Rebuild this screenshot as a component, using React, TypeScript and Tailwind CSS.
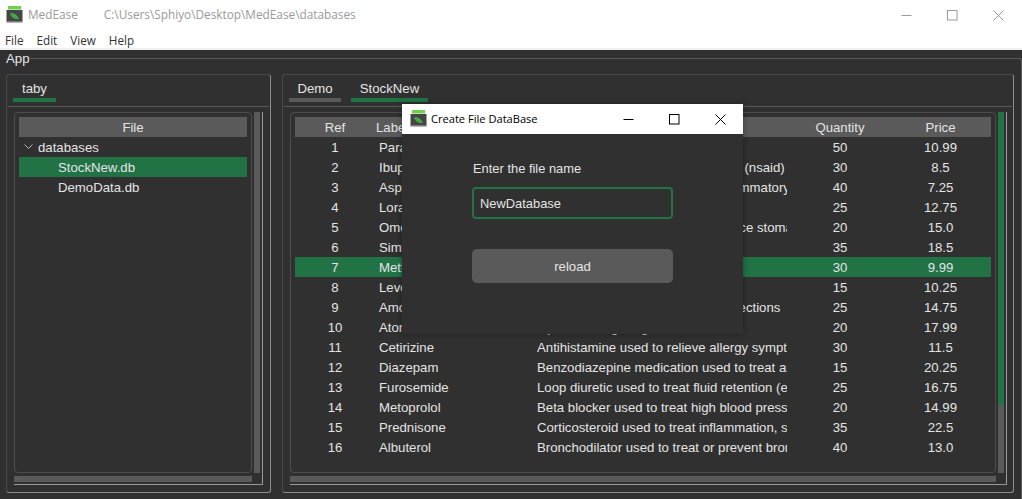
import React from "react";

const rows: [string, string, string, string, string][] = [
  ["1", "Paracetamol", "Pain reliever and fever reducer", "50", "10.99"],
  ["2", "Ibuprofen", "Pain reliever and anti-inflammatory (nsaid)", "30", "8.5"],
  ["3", "Aspirin", "Pain reliever, and also an anti-inflammatory drug", "40", "7.25"],
  ["4", "Loratadine", "Antihistamine for allergy symptoms", "25", "12.75"],
  ["5", "Omeprazole", "Proton pump inhibitor used to reduce stomach acid", "20", "15.0"],
  ["6", "Simvastatin", "Statin used to lower cholesterol", "35", "18.5"],
  ["7", "Metformin", "Oral diabetes medicine", "30", "9.99"],
  ["8", "Levothyroxine", "Thyroid hormone replacement", "15", "10.25"],
  ["9", "Amoxicillin", "Antibiotic used to treat bacterial infections", "25", "14.75"],
  ["10", "Atorvastatin", "Lipid-lowering drug", "20", "17.99"],
  ["11", "Cetirizine", "Antihistamine used to relieve allergy symptoms", "30", "11.5"],
  ["12", "Diazepam", "Benzodiazepine medication used to treat anxiety", "15", "20.25"],
  ["13", "Furosemide", "Loop diuretic used to treat fluid retention (edema)", "25", "16.75"],
  ["14", "Metoprolol", "Beta blocker used to treat high blood pressure", "20", "14.99"],
  ["15", "Prednisone", "Corticosteroid used to treat inflammation, swelling", "35", "22.5"],
  ["16", "Albuterol", "Bronchodilator used to treat or prevent bronchospasm", "40", "13.0"],
];

function AppIcon() {
  return (
    <svg width="18" height="18" viewBox="0 0 18 18" className="shrink-0">
      <rect x="2" y="0" width="13" height="3.5" fill="#72cf4e" />
      <rect x="0.5" y="4" width="16" height="12" fill="#454545" />
      <rect x="0.5" y="15.5" width="16" height="1.5" fill="#b5b5b5" />
      <path d="M4 7.5 C7 6.5 11 8.5 13 13 C9 13.5 5.5 11.5 4 7.5 Z" fill="#46b84a" />
      <path d="M5.5 8.5 L11.5 12.5" stroke="#2a7a35" strokeWidth="0.6" />
    </svg>
  );
}

function WinButtons({ color, gaps }: { color: string; gaps: string }) {
  return (
    <div className={`flex items-center ${gaps}`}>
      <svg width="11" height="11" viewBox="0 0 11 11">
        <path d="M0.5 5.5 H10.5" stroke={color} strokeWidth="1" />
      </svg>
      <svg width="11" height="11" viewBox="0 0 11 11">
        <rect x="0.5" y="0.5" width="9.5" height="9.5" fill="none" stroke={color} strokeWidth="1" />
      </svg>
      <svg width="11" height="11" viewBox="0 0 11 11">
        <path d="M0.5 0.5 L10.5 10.5 M10.5 0.5 L0.5 10.5" stroke={color} strokeWidth="1" />
      </svg>
    </div>
  );
}

function Tab({ label, active, width }: { label: string; active?: boolean; width: string }) {
  return (
    <div className={`flex flex-col items-stretch ${width}`}>
      <div className="h-[20px] leading-[22px] text-[#e4e4e4] text-center">{label}</div>
      <div className={active ? "h-[4px] bg-[#217346]" : "h-[4px] bg-[#5a5a5a]"} />
    </div>
  );
}

function ScrollWidget({ children, frameWidth, green }: { children: React.ReactNode; frameWidth: string; green?: boolean }) {
  return (
    <div className="flex-1 flex flex-col border-r border-b border-[#9a9a9a]">
      <div className="flex h-[361px]">
        <div className={`${frameWidth} h-full border border-[#4d4d4d] rounded-[4px] p-[4px] overflow-hidden`}>{children}</div>
        <div className="ml-[2px] w-[6px] h-full bg-[#5a5a5a] flex flex-col">
          {green ? <div className="h-[293px] bg-[#217346]" /> : null}
        </div>
      </div>
      <div className={`${frameWidth} h-[6px] mt-[3px] mb-[2px] bg-[#5a5a5a]`} />
    </div>
  );
}

function Panel({ width, tabs, pad, children }: { width: string; tabs: React.ReactNode; pad: string; children: React.ReactNode }) {
  return (
    <div className={`${width} h-[419px] flex flex-col rounded-[3px] border-t border-l border-[#4a4a4a] border-r-[#8c8c8c] border-b-[#8c8c8c] border-r border-b`}>
      <div className="h-[32px] mx-px border-b border-[#5a5a5a] flex items-start pt-[3px] gap-[10px] pl-[5px]">{tabs}</div>
      <div className={`flex-1 flex flex-col pt-[5px] pb-[7px] pl-[7px] ${pad}`}>{children}</div>
    </div>
  );
}

export default function App() {
  return (
    <div className="relative w-[1022px] h-[499px] overflow-hidden bg-[#303030] flex flex-col text-[13.2px] text-[#e4e4e4] font-['Liberation_Sans',Arial,sans-serif]">
      <div className="h-[30px] bg-white flex items-center pl-[6px] text-[11.8px] text-[#9a9a9a] font-['Open_Sans',sans-serif]">
        <div className="w-[22px] flex items-center"><AppIcon /></div>
        <span>MedEase</span>
        <span className="ml-[26px]">C:\Users\Sphiyo\Desktop\MedEase\databases</span>
        <div className="ml-auto mr-[18px]"><WinButtons color="#9a9a9a" gaps="gap-[35px]" /></div>
      </div>
      <div className="h-[18px] bg-white flex items-start pt-[2px] gap-[13px] pl-[5px] text-[11.7px] leading-[16px] text-[#333] font-['Open_Sans',sans-serif]">
        <span>File</span>
        <span>Edit</span>
        <span>View</span>
        <span>Help</span>
      </div>
      <div className="h-[2px] bg-[#f0f0f0]" />
      <div className="flex-1 mt-[8px] ml-[5px] border-t border-r border-[#5a5a5a] rounded-tr-[3px] pl-px pr-[7px] flex flex-col">
        <div className="-mt-[8px] h-[16px] leading-[16px] text-[#e8e8e8]"><span className="bg-[#303030] pr-px">App</span></div>
        <div className="mt-[7px] flex gap-[11px]">
          <Panel width="w-[265px]" pad="pr-[7px]" tabs={<Tab label="taby" active width="w-[43px]" />}>
            <ScrollWidget frameWidth="w-[238px]">
              <div className="h-[20px] bg-[#5a5a5a] text-center leading-[22px]">File</div>
              <div className="h-[20px] flex items-center">
                <svg width="10" height="6" viewBox="0 0 10 6" className="ml-[5px] mr-[4px]">
                  <path d="M0.5 0.5 L4.5 4.5 L8.5 0.5" fill="none" stroke="#b8b8b8" strokeWidth="1" />
                </svg>
                <span className="leading-[22px] h-[20px]">databases</span>
              </div>
              <div className="h-[20px] bg-[#217346] leading-[22px] pl-[39px]">StockNew.db</div>
              <div className="h-[20px] leading-[22px] pl-[39px]">DemoData.db</div>
            </ScrollWidget>
          </Panel>
          <Panel width="w-[732px]" pad="pr-[6px]" tabs={<><Tab label="Demo" width="w-[52px]" /><Tab label="StockNew" active width="w-[77px]" /></>}>
            <ScrollWidget frameWidth="w-[706px]" green>
              <div className="grid grid-cols-[80px_158px_257px_100px_101px] h-[20px] bg-[#5a5a5a] leading-[22px]">
                <div className="text-center">Ref</div>
                <div className="pl-px">Label</div>
                <div />
                <div className="text-center">Quantity</div>
                <div className="text-center">Price</div>
              </div>
              {rows.map((r) => (
                <div
                  key={r[0]}
                  className={`grid grid-cols-[80px_158px_257px_100px_101px] h-[20px] leading-[22px] ${r[0] === "7" ? "bg-[#217346]" : ""}`}
                >
                  <div className="text-center">{r[0]}</div>
                  <div className="pl-[4px]">{r[1]}</div>
                  <div className="pl-[4px]"><div className="w-[250px] overflow-hidden whitespace-nowrap">{r[2]}</div></div>
                  <div className="text-center">{r[3]}</div>
                  <div className="text-center">{r[4]}</div>
                </div>
              ))}
            </ScrollWidget>
          </Panel>
        </div>
      </div>

      <div className="absolute left-[402px] top-[104px] w-[341px] h-[230px] bg-[#303030] flex flex-col shadow-[0_0_6px_rgba(0,0,0,0.35)]">
        <div className="h-[30px] bg-white flex items-center pl-[8px] text-[11.1px] text-black font-['Open_Sans',sans-serif]">
          <div className="w-[21px] flex items-center"><AppIcon /></div>
          <span>Create File DataBase</span>
          <div className="ml-auto mr-[17px]"><WinButtons color="#000000" gaps="gap-[35px]" /></div>
        </div>
        <div className="flex flex-col ml-[70px] w-[201px]">
          <div className="mt-[24px] h-[20px] leading-[22px] pl-px text-[12.9px]">Enter the file name</div>
          <div className="mt-[9px] h-[32px] border-2 border-[#217346] rounded-[4px] leading-[30px] pl-[6px] text-[12.9px]">NewDatabase</div>
          <div className="mt-[30px] h-[34px] rounded-[5px] bg-[#5a5a5a] text-center leading-[36px]">reload</div>
        </div>
      </div>
    </div>
  );
}
